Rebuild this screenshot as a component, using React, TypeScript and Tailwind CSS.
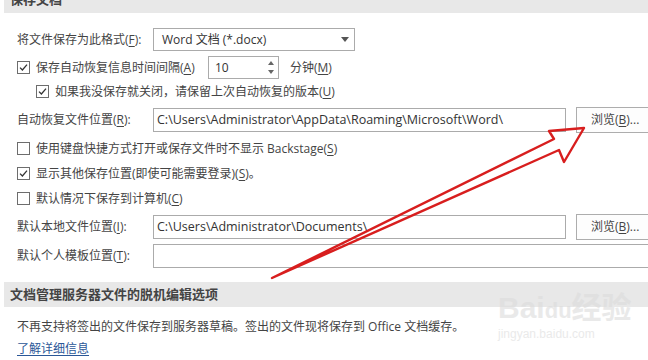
import React from 'react';

// Access-key letter, underlined like the Office dialog
const K: React.FC<{ children: React.ReactNode }> = ({ children }) => (
  <span className="underline underline-offset-2">{children}</span>
);

const CheckBox: React.FC<{ checked?: boolean }> = ({ checked }) => (
  <span className="flex h-[13px] w-[13px] shrink-0 items-center justify-center border border-[#6d6d6d] bg-white">
    {checked && (
      <svg width="9" height="9" viewBox="0 0 9 9" fill="none">
        <path d="M1 4.6 L3.4 7 L8 1.6" stroke="#333" strokeWidth="1.3" />
      </svg>
    )}
  </span>
);

const BrowseButton: React.FC = () => (
  <div className="ml-[10px] flex h-[26px] w-[80px] shrink-0 items-center border border-[#adadad] bg-[#fdfdfd] pl-[14px]">
    浏览(<K>B</K>)...
  </div>
);

const App: React.FC = () => {
  return (
    <div
      className="relative h-[360px] w-[648px] overflow-hidden bg-white text-[12px] text-[#444]"
      style={{ fontFamily: '"Open Sans", "Noto Sans CJK SC", sans-serif' }}
    >
      {/* Section header (scrolled, cut at top) */}
      <div className="ml-[4px] h-[13px] overflow-hidden bg-[#e8e8e8] pl-[6px]">
        <div className="-mt-[9px] text-[13px] font-bold leading-[16px] text-[#444]">保存文档</div>
      </div>

      <div className="pl-[17px]">
        {/* Format */}
        <div className="mt-[15px] flex h-[23px] items-center">
          <span className="w-[136px]">将文件保存为此格式(<K>F</K>):</span>
          <div className="flex h-[23px] w-[202px] items-center justify-between border border-[#ababab] pl-[8px] pr-[5px] text-[#333]">
            <span>Word 文档 (*.docx)</span>
            <svg width="8" height="5" viewBox="0 0 8 5">
              <path d="M0 0 L8 0 L4 5 Z" fill="#555" />
            </svg>
          </div>
        </div>

        {/* AutoRecover interval */}
        <div className="mt-[5px] flex h-[23px] items-center">
          <CheckBox checked />
          <span className="ml-[6px] w-[172px]">保存自动恢复信息时间间隔(<K>A</K>)</span>
          <div className="flex h-[23px] w-[71px] items-center justify-between border border-[#ababab] pl-[6px] pr-[4px] text-[#333]">
            <span>10</span>
            <div className="flex flex-col gap-[5px]">
              <svg width="6" height="4" viewBox="0 0 6 4">
                <path d="M0 4 L6 4 L3 0 Z" fill="#666" />
              </svg>
              <svg width="6" height="4" viewBox="0 0 6 4">
                <path d="M0 0 L6 0 L3 4 Z" fill="#666" />
              </svg>
            </div>
          </div>
          <span className="ml-[11px]">分钟(<K>M</K>)</span>
        </div>

        {/* Keep last version */}
        <div className="flex h-[25px] items-center pl-[19px]">
          <CheckBox checked />
          <span className="ml-[6px]">如果我没保存就关闭，请保留上次自动恢复的版本(<K>U</K>)</span>
        </div>

        {/* AutoRecover location */}
        <div className="mt-[3px] flex h-[26px] items-center">
          <span className="w-[136px] shrink-0">自动恢复文件位置(<K>R</K>):</span>
          <div className="flex h-[24px] w-[413px] shrink-0 items-center border border-[#ababab] pl-[3px] text-[12.5px] text-[#333]">
            C:\Users\Administrator\AppData\Roaming\Microsoft\Word\
          </div>
          <BrowseButton />
        </div>

        <div className="mt-[3px] flex h-[25px] items-center">
          <CheckBox />
          <span className="ml-[6px]">使用键盘快捷方式打开或保存文件时不显示 Backstage(<K>S</K>)</span>
        </div>
        <div className="flex h-[25px] items-center">
          <CheckBox checked />
          <span className="ml-[6px]">显示其他保存位置(即使可能需要登录)(<K>S</K>)。</span>
        </div>
        <div className="flex h-[25px] items-center">
          <CheckBox />
          <span className="ml-[6px]">默认情况下保存到计算机(<K>C</K>)</span>
        </div>

        {/* Default local location */}
        <div className="mt-[2px] flex h-[28px] items-center">
          <span className="w-[136px] shrink-0">默认本地文件位置(<K>I</K>):</span>
          <div className="flex h-[24px] w-[413px] shrink-0 items-center border border-[#ababab] pl-[3px] text-[12.5px] text-[#333]">
            C:\Users\Administrator\Documents\
          </div>
          <BrowseButton />
        </div>

        {/* Template location */}
        <div className="mt-[3px] flex h-[24px] items-center">
          <span className="w-[136px] shrink-0">默认个人模板位置(<K>T</K>):</span>
          <div className="h-[24px] w-[520px] shrink-0 border border-[#ababab]" />
        </div>
      </div>

      {/* Offline editing section */}
      <div className="ml-[4px] mt-[14px] flex h-[25px] items-center bg-[#e8e8e8] pl-[6px] text-[13px] font-bold text-[#444]">
        文档管理服务器文件的脱机编辑选项
      </div>
      <div className="pl-[17px]">
        <div className="mt-[9px] leading-[22px]">
          不再支持将签出的文件保存到服务器草稿。签出的文件现将保存到 Office 文档缓存。
        </div>
        <div className="leading-[22px] text-[#2b5797] underline underline-offset-2">了解详细信息</div>
      </div>

      {/* Watermark */}
      <div className="pointer-events-none absolute left-[498px] top-[292px] flex flex-col items-start whitespace-nowrap text-[#dcdcdc] opacity-60">
        <span className="text-[30px] font-bold leading-[32px]" style={{ fontFamily: '"Liberation Sans", "Noto Sans CJK SC", sans-serif' }}>
          Bai<span className="text-[22px]">du</span>经验
        </span>
        <span className="text-[12px] leading-[14px]" style={{ fontFamily: '"Liberation Sans", sans-serif' }}>
          jingyan.baidu.com
        </span>
      </div>

      {/* Red annotation arrow */}
      <svg className="pointer-events-none absolute left-0 top-0" width="648" height="360" viewBox="0 0 648 360" fill="none">
        <path
          d="M272 278 L554 139 L549 131 L584 128 L564 162 L559 150 Z"
          stroke="#d81e1e"
          strokeWidth="2.4"
          strokeLinejoin="round"
        />
      </svg>
    </div>
  );
};

export default App;
